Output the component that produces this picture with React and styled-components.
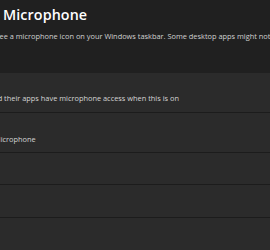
import styled, { createGlobalStyle } from 'styled-components';

const GlobalStyle = createGlobalStyle`
    html, body {
        margin: 0;
        padding: 0;
        background: #202020;
    }
    body {
        font-family: "Open Sans", "Noto Sans", sans-serif;
    }
`

const Page = styled.div`
    width: 270px;
    height: 250px;
    overflow: hidden;
    background: #202020;
    display: flex;
    flex-direction: column;
`

const Header = styled.div`
    padding: 5px 0 0 3px;
    height: 73px;
    box-sizing: border-box;
    flex-shrink: 0;
`

const Title = styled.h1`
    margin: 0;
    font-size: 14.3px;
    font-weight: 600;
    color: #ffffff;
    line-height: 20px;
    white-space: nowrap;
    letter-spacing: 0.1px;
`

const Description = styled.p`
    margin: 6px 0 0 -3px;
    font-size: 7.4px;
    line-height: 10px;
    color: #d0d0d0;
    white-space: nowrap;
    text-indent: -4px;
`

const List = styled.div`
    display: flex;
    flex-direction: column;
    gap: 1px;
    background: #1c1c1c;
    flex: 1;
`

const Row = styled.div`
    height: ${p => p.$h}px;
    background: #2b2b2b;
    display: flex;
    align-items: flex-start;
    padding-top: ${p => p.$offset || 0}px;
    box-sizing: border-box;
    overflow: hidden;
    flex-shrink: 0;
`

const RowText = styled.span`
    font-size: 7.4px;
    line-height: 10px;
    color: #d4d4d4;
    white-space: nowrap;
    margin-left: ${p => p.$shift}px;
`

const App = () => {
    return (
        <>
            <GlobalStyle />
            <Page>
                <Header>
                    <Title>Microphone</Title>
                    <Description>see a microphone icon on your Windows taskbar. Some desktop apps might not</Description>
                </Header>
                <List>
                    <Row $h={39} $offset={20}>
                        <RowText $shift={-11}>and their apps have microphone access when this is on</RowText>
                    </Row>
                    <Row $h={39} $offset={21}>
                        <RowText $shift={-6}>Microphone</RowText>
                    </Row>
                    <Row $h={31} />
                    <Row $h={32} />
                    <Row $h={40} />
                </List>
            </Page>
        </>
    )
}

export default App;
